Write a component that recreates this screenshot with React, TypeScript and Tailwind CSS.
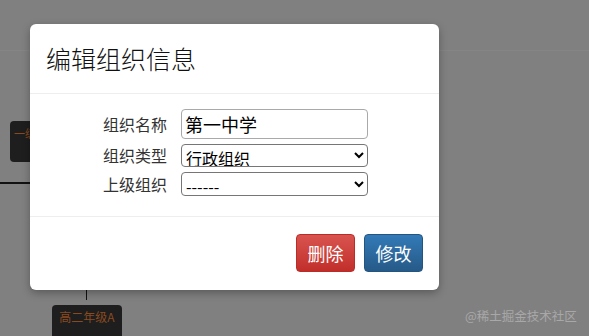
import { useState } from "react";

const font = { fontFamily: '"Noto Sans CJK SC", "Noto Sans", sans-serif' };

const App = (): JSX.Element => {
  const [name, setName] = useState<string>("第一中学");
  const [type, setType] = useState<string>("行政组织");
  const [parent, setParent] = useState<string>("------");

  return (
    <div className="relative w-[589px] h-[336px] overflow-hidden bg-[#808080]" style={font}>
      {/* page behind the overlay */}
      <div className="absolute left-0 top-[50px] w-full h-px bg-[#858585]" />
      <div className="absolute left-[10px] top-[121px] w-[30px] h-[41px] rounded bg-[#1e1e1e] text-[11px] text-[#8a4a20] pl-1 pt-1">
        一级
      </div>
      <div className="absolute left-0 top-[182px] w-[40px] h-[2px] bg-[#111]" />
      <div className="absolute left-[86px] top-[288px] w-px h-[12px] bg-[#111]" />
      <div className="absolute left-[52px] top-[305px] w-[70px] h-[40px] rounded bg-[#1e1e1e] text-[12px] text-[#8a4a20] text-center pt-[3px]">
        高二年级A
      </div>
      <div className="absolute left-[465px] top-[307px] whitespace-nowrap text-[12.5px] leading-[18px] text-[#a8a8a8]">
        @稀土掘金技术社区
      </div>

      {/* modal */}
      <div className="absolute left-[30px] top-[24px] w-[409px] h-[266px] rounded-md bg-white flex flex-col shadow-[0_3px_9px_rgba(0,0,0,0.3)]">
        <div className="h-[70px] border-b border-[#eeeeee] flex items-center px-[16px]">
          <h1 className="text-[25px] font-light text-[#111] leading-none">编辑组织信息</h1>
        </div>
        <div className="h-[123px] border-b border-[#eeeeee] pt-[15px]">
          <div className="grid grid-cols-[137px_187px] gap-x-[14px] items-center text-[16px] text-[#333]">
            <label className="text-right leading-[30px]">组织名称</label>
            <input
              value={name}
              onChange={(e) => setName(e.target.value)}
              className="h-[30px] border border-[#a9a9a9] rounded-sm px-[3px] text-[18px] text-black outline-none"
            />
            <label className="text-right leading-[23px] mt-[5px]">组织类型</label>
            <select
              value={type}
              onChange={(e) => setType(e.target.value)}
              className="h-[23px] mt-[5px] border border-[#767676] rounded-sm text-[16px] leading-none text-black bg-white"
            >
              <option>行政组织</option>
              <option>教学组织</option>
            </select>
            <label className="text-right leading-[24px] mt-[5px]">上级组织</label>
            <select
              value={parent}
              onChange={(e) => setParent(e.target.value)}
              className="h-[24px] mt-[5px] border border-[#767676] rounded-sm text-[16px] leading-none text-black bg-white"
            >
              <option>------</option>
            </select>
          </div>
        </div>
        <div className="flex-1 flex justify-end items-start pt-[17px] pr-[16px] gap-[9px]">
          <button className="w-[59px] h-[38px] rounded border border-[#b92c28] bg-gradient-to-b from-[#d9534f] to-[#c12e2a] text-white text-[18px]">
            删除
          </button>
          <button className="w-[59px] h-[38px] rounded border border-[#245580] bg-gradient-to-b from-[#337ab7] to-[#265a88] text-white text-[18px]">
            修改
          </button>
        </div>
      </div>
    </div>
  );
};

export default App;
